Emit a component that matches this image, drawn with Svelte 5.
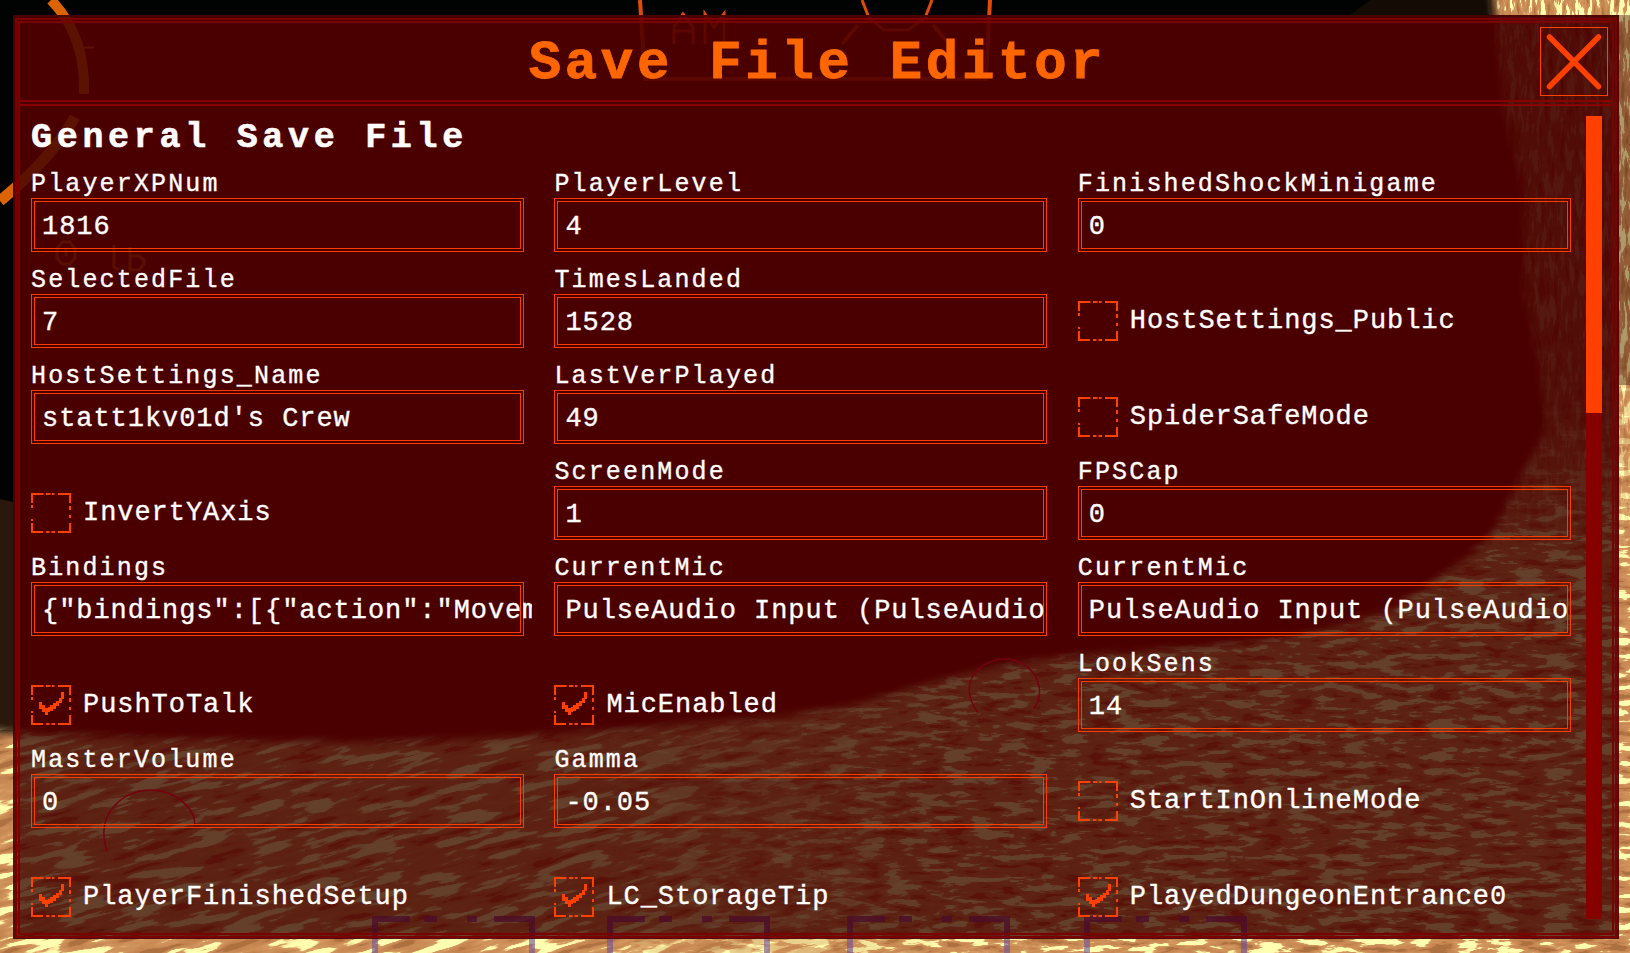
<script>
  const entries = [
    { name: 'PlayerXPNum', value: '1816' },
    { name: 'PlayerLevel', value: '4' },
    { name: 'FinishedShockMinigame', value: '0' },
    { name: 'SelectedFile', value: '7' },
    { name: 'TimesLanded', value: '1528' },
    { name: 'HostSettings_Public', on: false },
    { name: 'HostSettings_Name', value: "statt1kv01d's Crew" },
    { name: 'LastVerPlayed', value: '49' },
    { name: 'SpiderSafeMode', on: false },
    { name: 'InvertYAxis', on: false },
    { name: 'ScreenMode', value: '1' },
    { name: 'FPSCap', value: '0' },
    { name: 'Bindings', value: '{"bindings":[{"action":"Movem' },
    { name: 'CurrentMic', value: 'PulseAudio Input (PulseAudio' },
    { name: 'CurrentMic', value: 'PulseAudio Input (PulseAudio' },
    { name: 'PushToTalk', on: true },
    { name: 'MicEnabled', on: true },
    { name: 'LookSens', value: '14' },
    { name: 'MasterVolume', value: '0' },
    { name: 'Gamma', value: '-0.05' },
    { name: 'StartInOnlineMode', on: false },
    { name: 'PlayerFinishedSetup', on: true },
    { name: 'LC_StorageTip', on: true },
    { name: 'PlayedDungeonEntrance0', on: true }
  ];

  const tones = [
    {
      id: 'lit',
      r: '.68 .76 .78 .79 .8 .81 .84 1 1 1 1',
      g: '.44 .51 .53 .54 .56 .58 .6 .95 1 1 1',
      b: '.25 .31 .32 .33 .34 .36 .38 .64 .7 .7 .7'
    },
    {
      id: 'dim',
      r: '.35 .36 .365 .365 .365 .37 .37 .395 .4 .4 .4',
      g: '.08 .12 .135 .14 .14 .145 .15 .24 .27 .27 .27',
      b: '.04 .06 .075 .075 .08 .08 .085 .17 .18 .18 .18'
    }
  ];
  const grains = [
    { id: 'slope', f: '0.02 0.12', seed: 4, shift: -0.66 },
    { id: 'flat', f: '0.035 0.13', seed: 11, shift: -0.68 },
    { id: 'bark', f: '0.2 0.04', seed: 7, shift: -0.66 }
  ];
  const slots = [372, 607, 847, 1084];
</script>

{#snippet terrain(tone)}
  <g mask="url(#ground)">
    <rect width="1630" height="953" filter="url(#{tone}-flat)" />
    <g mask="url(#left-side)">
      <g transform="rotate(-14 300 850)">
        <rect x="-150" y="500" width="1250" height="700" filter="url(#{tone}-slope)" />
      </g>
    </g>
    <g mask="url(#trunk)">
      <rect x="1450" width="180" height="560" filter="url(#{tone}-bark)" />
    </g>
  </g>
{/snippet}

{#snippet hud(orange, red, violet)}
  <g fill="none">
    <g stroke={orange}>
      <path d="M51 0 Q86 36 84 94" stroke-width="10" />
      <path d="M73 47.500 H94" stroke-width="2" />
      <path d="M75 117 Q52 158 0 201" stroke-width="11" />
    </g>
    <g stroke={red} stroke-width="4">
      <path d="M640 0 L645 79 H986 L990 0" />
      <path d="M862 0 L869 18 L884 30 H908 L925 18 L932 0" stroke-width="3" />
      <path d="M858 25 L842 44 M933 25 L949 44" />
      <path d="M674 44 V27 L683 14 L693 27 V44 M674 31 H693 M705 44 V14 L714 27 L724 14 V44" stroke-width="3" />
    </g>
    <g stroke={violet} stroke-width="6">
      {#each slots as x}
        <path d="M{x + 3} 953 V919 H{x + 38} M{x + 52} 919 H{x + 65} M{x + 95} 919 H{x + 105} M{x + 122} 919 H{x + 160} V953" />
      {/each}
    </g>
  </g>
{/snippet}

<main>
  <svg class="scene" viewBox="0 0 1630 953" aria-hidden="true">
    <defs>
      {#each tones as t}
        {#each grains as g}
          <filter id="{t.id}-{g.id}" x="0" y="0" width="100%" height="100%" color-interpolation-filters="sRGB">
            <feTurbulence type="fractalNoise" baseFrequency={g.f} numOctaves="4" seed={g.seed} />
            <feColorMatrix
              values="2.3 0 0 0 {g.shift}  2.3 0 0 0 {g.shift}  2.3 0 0 0 {g.shift}  0 0 0 0 1"
            />
            <feComponentTransfer>
              <feFuncR type="table" tableValues={t.r} />
              <feFuncG type="table" tableValues={t.g} />
              <feFuncB type="table" tableValues={t.b} />
            </feComponentTransfer>
          </filter>
        {/each}
      {/each}
      <filter id="soft"><feGaussianBlur stdDeviation="4" /></filter>
      <linearGradient id="fade-x">
        <stop offset=".6" stop-color="#fff" />
        <stop offset="1" stop-color="#000" />
      </linearGradient>
      <linearGradient id="fade-y" x2="0" y2="1">
        <stop offset=".6" stop-color="#fff" />
        <stop offset="1" stop-color="#000" />
      </linearGradient>
      <linearGradient id="shade" x1="0" y1="0" x2="0" y2="1">
        <stop offset="0" stop-color="#4b0000" stop-opacity=".65" />
        <stop offset=".7" stop-color="#4b0000" stop-opacity=".6" />
        <stop offset="1" stop-color="#4b0000" stop-opacity="0" />
      </linearGradient>
      <mask id="ground" maskUnits="userSpaceOnUse" x="0" y="0" width="1630" height="953">
        <path
          d="M-20 731 Q200 742 380 742 Q560 736 680 724 Q820 716 885 696 Q970 667 1060 657 L1190 647 Q1340 636 1400 603 Q1470 560 1495 530 Q1520 480 1546 427 Q1540 350 1525 300 L1524 190 L1502 100 L1492 -20 H1650 V973 H-20 Z"
          fill="#fff"
          filter="url(#soft)"
        />
      </mask>
      <mask id="left-side" maskUnits="userSpaceOnUse" x="0" y="600" width="950" height="353">
        <rect y="600" width="950" height="353" fill="url(#fade-x)" />
      </mask>
      <mask id="trunk" maskUnits="userSpaceOnUse" x="1450" y="0" width="180" height="560">
        <rect x="1450" width="180" height="560" fill="url(#fade-y)" />
      </mask>
      <clipPath id="window"><rect x="13" y="15" width="1606" height="924" /></clipPath>
    </defs>

    <rect width="1630" height="953" fill="#010202" />
    <path d="M1350 15 L1370 0 H1500 V15 Z" fill="#150b05" />
    <path d="M0 499 L13 502 V730 H0 Z" fill="#2b180c" />
    {@render terrain('lit')}
    <rect x="1619" y="15" width="11" height="370" fill="#4a2010" opacity=".45" />
    {@render hud('#dc6400', '#e04c08', 'rgba(110,80,150,.6)')}
    <g clip-path="url(#window)">
      <rect width="1630" height="953" fill="#4b0000" />
      {@render terrain('dim')}
      <path d="M1440 15 H1619 V560 H1440 Z" fill="url(#shade)" />
      {@render hud('#5c1500', '#5c0900', 'rgba(76,12,45,.75)')}
      <g fill="none" stroke="#780010" stroke-width="1.5">
        <path d="M107 851 C94 812 125 789 153 790 C182 792 198 815 194 826" />
        <path d="M978 713 C955 680 983 659 1004 659 C1032 659 1049 688 1034 708" />
      </g>
      <g fill="none" stroke="#5c1000" stroke-width="3">
        <path d="M62 242 H70 L75 249 V258 L70 264 H62 L57 258 V249 Z M66 249 V256" />
        <path d="M114 245 V267 L119 270 M130 247 V270 H139 L144 264 V260 L139 256 H130" />
      </g>
    </g>
  </svg>

  <section class="window">
    <div class="frame">
      <header>
        <h1>Save File Editor</h1>
        <button class="close" aria-label="Close">
          <svg viewBox="0 0 66 67"><path d="M8.500 9 L57.500 58.500 M57.500 9 L8.500 58.500" /></svg>
        </button>
      </header>
      <div class="body">
        <div class="content">
          <h2>General Save File</h2>
          <div class="grid">
            {#each entries as entry}
              {#if entry.value !== undefined}
                <div class="cell">
                  <div class="label">{entry.name}</div>
                  <div class="field"><span>{entry.value}</span></div>
                </div>
              {:else}
                <div class="cell toggle">
                  <svg class="box" viewBox="0 0 40 40">
                    <path
                      d="M0 1H12.500 M15 1H19.500 M21 1H23.500 M27 1H40 M1 0V10 M1 12V15 M1 26V28 M1 30V40 M39 0V10 M39 13V17 M39 22V25 M39 30V40 M0 39H12 M15 39H18.500 M20.500 39H24 M27 39H40"
                    />
                    {#if entry.on}
                      <path
                        class="tick"
                        d="M8 17H11V20H14V23H17V22H19V20H22V18H25V16H28V13H30V7H33V14H31V18H28V21H25V24H22V26H19V27H17V30H14V27H11V24H8Z"
                      />
                    {/if}
                  </svg>
                  <span>{entry.name}</span>
                </div>
              {/if}
            {/each}
          </div>
        </div>
        <div class="track"><div class="thumb"></div></div>
      </div>
    </div>
  </section>
</main>

<style>
  :global(body) {
    margin: 0;
    background: #000;
    overflow: hidden;
  }
  main {
    position: relative;
    box-sizing: border-box;
    width: 1630px;
    height: 953px;
    padding: 15px 11px 14px 13px;
    overflow: hidden;
    color: #fff;
    font-family: 'Liberation Mono', monospace;
    -webkit-text-stroke: 0.35px currentColor;
  }
  .scene {
    position: absolute;
    inset: 0;
    width: 1630px;
    height: 953px;
  }
  .window {
    position: relative;
    box-sizing: border-box;
    height: 924px;
    padding: 3px 2px 1px;
    background: rgba(75, 0, 0, 0.05);
    box-shadow: inset 0 0 0 2px rgba(75, 0, 0, 0.6);
  }
  .frame {
    box-sizing: border-box;
    display: flex;
    flex-direction: column;
    height: 920px;
    border: 5px double #7c0000;
  }
  header {
    box-sizing: border-box;
    flex: none;
    display: grid;
    grid-template-columns: 68px 1fr 68px;
    align-items: start;
    height: 83px;
    padding: 4px 4px 0 5px;
    border-bottom: 6px double #860000;
  }
  h1 {
    grid-column: 2;
    margin: 0;
    padding-left: 2px;
    color: #ff6600;
    font-size: 54px;
    line-height: 74px;
    letter-spacing: 3.7px;
    text-align: center;
    white-space: pre;
    -webkit-text-stroke: 0.8px currentColor;
  }
  .close {
    box-sizing: border-box;
    width: 68px;
    height: 69px;
    padding: 0;
    border: 1px solid #ff4000;
    background: none;
  }
  .close svg {
    display: block;
    width: 66px;
    height: 67px;
    fill: none;
    stroke: #ff4000;
    stroke-width: 5.5;
    stroke-linecap: round;
  }
  .body {
    display: flex;
    justify-content: space-between;
    flex: 1;
    min-height: 0;
    padding: 10px 10px 13px 11px;
  }
  .content {
    width: 1541px;
    overflow: hidden;
  }
  h2 {
    height: 50px;
    margin: 0;
    font-size: 35px;
    line-height: 45px;
    letter-spacing: 4.7px;
    -webkit-text-stroke: 0.6px currentColor;
  }
  .grid {
    display: grid;
    grid-template-columns: repeat(3, 493px);
    grid-auto-rows: 96px;
    column-gap: 30.4px;
  }
  .label {
    height: 27px;
    padding-top: 5px;
    font-size: 25px;
    line-height: 28px;
    letter-spacing: 2.15px;
  }
  .field {
    box-sizing: border-box;
    height: 54px;
    border: 4px double #ff3c00;
    padding-left: 7px;
  }
  .field span {
    display: block;
    width: 490px;
    overflow: hidden;
    font-size: 27px;
    line-height: 50px;
    letter-spacing: 0.95px;
    white-space: pre;
  }
  .toggle {
    display: flex;
    align-items: flex-start;
    gap: 12px;
    padding-top: 39px;
    font-size: 27px;
    line-height: 40px;
    letter-spacing: 0.95px;
  }
  .box {
    width: 40px;
    height: 40px;
    fill: none;
    stroke: #ff4000;
    stroke-width: 2;
  }
  .tick {
    fill: #ff4000;
    stroke: none;
  }
  .track {
    flex: none;
    align-self: flex-start;
    width: 16px;
    height: 803px;
    background: #870000;
  }
  .thumb {
    height: 297px;
    background: #ff4000;
  }
</style>
